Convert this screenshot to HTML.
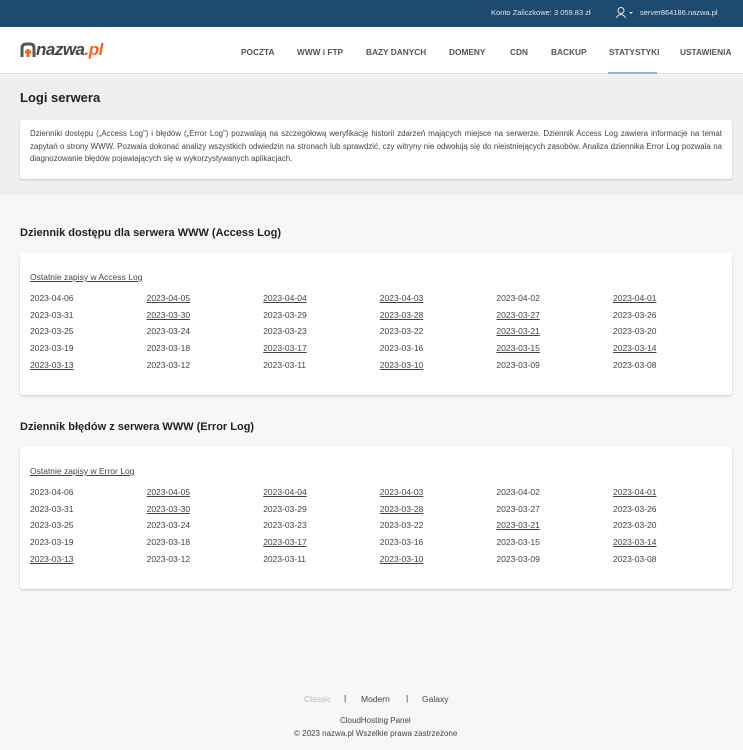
<!DOCTYPE html>
<html><head><meta charset="utf-8"><style>
*{margin:0;padding:0;box-sizing:border-box}
body{width:743px;height:750px;background:#f7f7f7;font-family:"Liberation Sans",sans-serif;color:#333;position:relative;overflow:hidden}
.a{position:absolute;white-space:nowrap}
#top{position:absolute;left:0;top:0;width:743px;height:27px;background:#1f4a70}
#nav{position:absolute;left:0;top:27px;width:743px;height:47px;background:#fff;border-bottom:1px solid #dadada}
#gray{position:absolute;left:0;top:75px;width:743px;height:120px;background:#efefef}
.nav{font-size:8.3px;font-weight:bold;color:#555;top:47px}
.card{position:absolute;left:20px;width:712px;background:#fff;border-radius:3px;box-shadow:0 1px 2px rgba(0,0,0,.18)}
.h{font-size:11px;font-weight:bold;color:#222}
.d{font-size:8.5px;color:#444}
.u{text-decoration:underline}
.f{font-size:8.5px;color:#444}
</style></head><body>
<div id="top"></div>
<div class="a" style="left:491px;top:8px;font-size:7.5px;color:#dde5ee">Konto Zaliczkowe: 3 059.83 zł</div>
<svg class="a" style="left:615px;top:6px" width="20" height="14" viewBox="0 0 20 14"><circle cx="6" cy="4.5" r="3" fill="none" stroke="#dde5ee" stroke-width="1"/><path d="M1 12 Q6 5 11 12" fill="none" stroke="#dde5ee" stroke-width="1"/><path d="M14 6 L18 6 L16 8Z" fill="#dde5ee"/></svg>
<div class="a" style="left:640px;top:8px;font-size:7.5px;color:#dde5ee">server864186.nazwa.pl</div>
<div id="nav"></div>
<svg class="a" style="left:20px;top:42px" width="16" height="16" viewBox="0 0 16 16"><path d="M2 15 V6 Q2 2 7 2 H10 Q14 2 14 6 V15" fill="none" stroke="#555" stroke-width="3"/><path d="M5 10 H11 M8 7 V15" stroke="#f26522" stroke-width="3"/></svg>
<div class="a" style="left:36px;top:40px;font-size:17px;font-weight:bold;font-style:italic;color:#444;letter-spacing:-0.5px">nazwa<span style="color:#f26522">.pl</span></div>
<div class="a nav" style="left:241px">POCZTA</div>
<div class="a nav" style="left:297px">WWW i FTP</div>
<div class="a nav" style="left:366px">BAZY DANYCH</div>
<div class="a nav" style="left:449px">DOMENY</div>
<div class="a nav" style="left:510px">CDN</div>
<div class="a nav" style="left:551px">BACKUP</div>
<div class="a nav" style="left:609px">STATYSTYKI</div>
<div class="a nav" style="left:680px">USTAWIENIA</div>
<div class="a" style="left:608px;top:72px;width:49px;height:2px;background:#8ab6dc"></div>
<div id="gray"></div>
<div class="a h" style="left:20px;top:90px;font-size:13px">Logi serwera</div>
<div class="card" style="top:120px;height:59px"></div>
<div class="a" style="left:30px;top:128px;width:692px;white-space:normal;font-size:7.9px;line-height:12.5px;color:#444;text-align:justify">Dzienniki dostępu („Access Log”) i błędów („Error Log”) pozwalają na szczegółową weryfikację historii zdarzeń mających miejsce na serwerze. Dziennik Access Log zawiera informacje na temat zapytań o strony WWW. Pozwala dokonać analizy wszystkich odwiedzin na stronach lub sprawdzić, czy witryny nie odwołują się do nieistniejących zasobów. Analiza dziennika Error Log pozwala na diagnozowanie błędów pojawiających się w wykorzystywanych aplikacjach.</div>

<div class="a h" style="left:20px;top:227px">Dziennik dostępu dla serwera WWW (Access Log)</div>
<div class="card" style="top:253px;height:142px"></div>
<div class="a d u" style="left:30px;top:272px">Ostatnie zapisy w Access Log</div>

<div class="a h" style="left:20px;top:421px">Dziennik błędów z serwera WWW (Error Log)</div>
<div class="card" style="top:446px;height:143px"></div>
<div class="a d u" style="left:30px;top:466px">Ostatnie zapisy w Error Log</div>

<div id="g"></div>
<script>
var dates=["2023-04-06","2023-04-05","2023-04-04","2023-04-03","2023-04-02","2023-04-01","2023-03-31","2023-03-30","2023-03-29","2023-03-28","2023-03-27","2023-03-26","2023-03-25","2023-03-24","2023-03-23","2023-03-22","2023-03-21","2023-03-20","2023-03-19","2023-03-18","2023-03-17","2023-03-16","2023-03-15","2023-03-14","2023-03-13","2023-03-12","2023-03-11","2023-03-10","2023-03-09","2023-03-08"];
var u1=[1,2,3,5,7,9,10,16,20,22,23,24,27];
var u2=[1,2,3,5,7,9,16,20,23,24,27];
function grid(top,u){var h="";for(var i=0;i<30;i++){var r=Math.floor(i/6),c=i%6;h+='<div class="a d'+(u.indexOf(i)>=0?' u':'')+'" style="left:'+(30+c*116.6)+'px;top:'+(top+r*16.7)+'px">'+dates[i]+'</div>';}return h;}
document.getElementById("g").innerHTML=grid(293,u1)+grid(487,u2);
</script>

<div class="a f" style="left:304px;top:694px;color:#bbb">Classic</div>
<div class="a f" style="left:344px;top:693px;color:#333">|</div>
<div class="a f" style="left:361px;top:694px">Modern</div>
<div class="a f" style="left:406px;top:693px;color:#333">|</div>
<div class="a f" style="left:422px;top:694px">Galaxy</div>
<div class="a f" style="left:340px;top:716px;font-size:8px">CloudHosting Panel</div>
<div class="a f" style="left:294px;top:729px;font-size:8px">© 2023 nazwa.pl Wszelkie prawa zastrzeżone</div>
</body></html>
